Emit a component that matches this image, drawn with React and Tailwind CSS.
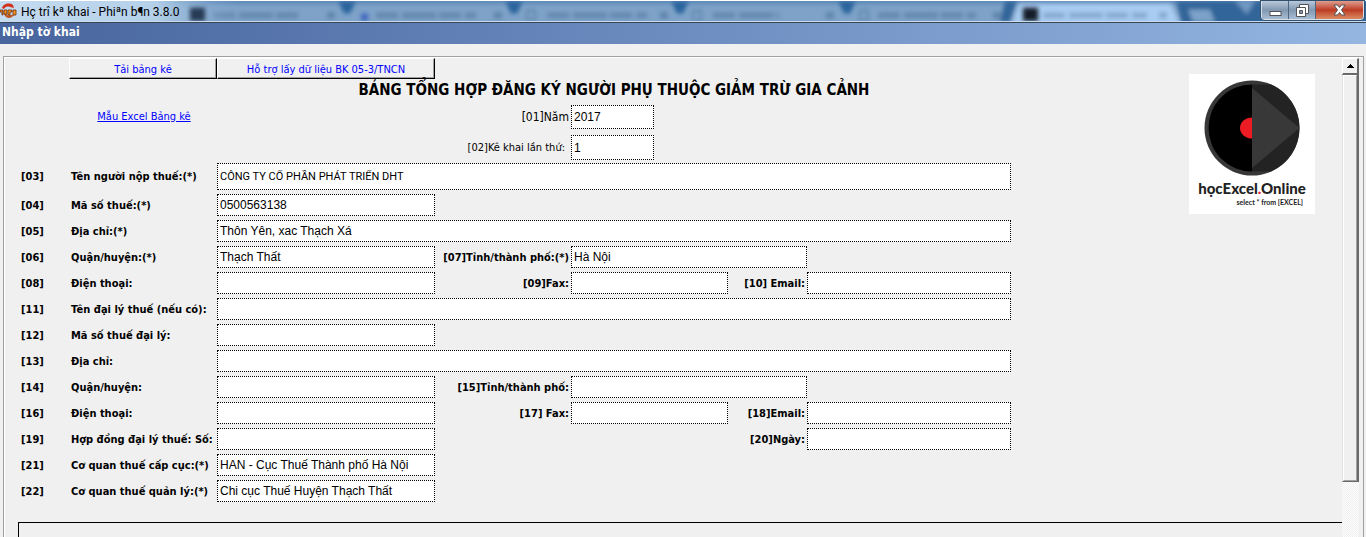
import { clsx } from "clsx";

const rows = [
  {
    code: "03",
    label: "Tên người nộp thuế:(*)",
    value: "CÔNG TY CỔ PHẦN PHÁT TRIỂN DHT",
    wide: true,
    tall: true,
  },
  { code: "04", label: "Mã số thuế:(*)", value: "0500563138" },
  { code: "05", label: "Địa chỉ:(*)", value: "Thôn Yên, xac Thạch Xá", wide: true },
  {
    code: "06",
    label: "Quận/huyện:(*)",
    value: "Thạch Thất",
    city: { label: "[07]Tỉnh/thành phố:(*)", value: "Hà Nội" },
  },
  {
    code: "08",
    label: "Điện thoại:",
    fax: { label: "[09]Fax:" },
    last: { label: "[10] Email:" },
  },
  { code: "11", label: "Tên đại lý thuế (nếu có):", wide: true },
  { code: "12", label: "Mã số thuế đại lý:" },
  { code: "13", label: "Địa chỉ:", wide: true },
  { code: "14", label: "Quận/huyện:", city: { label: "[15]Tỉnh/thành phố:" } },
  {
    code: "16",
    label: "Điện thoại:",
    fax: { label: "[17] Fax:" },
    last: { label: "[18]Email:" },
  },
  { code: "19", label: "Hợp đồng đại lý thuế: Số:", last: { label: "[20]Ngày:" } },
  {
    code: "21",
    label: "Cơ quan thuế cấp cục:(*)",
    value: "HAN - Cục Thuế Thành phố Hà Nội",
  },
  {
    code: "22",
    label: "Cơ quan thuế quản lý:(*)",
    value: "Chi cục Thuế Huyện Thạch Thất",
  },
];

const gridCols =
  "grid grid-cols-[50px_146px_218fr_136px_157fr_79fr_204fr] items-center";
const tahoma = "font-['DejaVu_Sans_Condensed','DejaVu_Sans',sans-serif]";
const arial = "text-[12px] font-['Liberation_Sans',sans-serif]";
const labelText = "pt-0.5 text-[11px] font-bold whitespace-nowrap";
const raisedButton =
  "h-[21px] border border-white border-r-black border-b-black pt-0.5 text-[11px] leading-4 whitespace-nowrap text-[#0000ff] shadow-[inset_-1px_-1px_0_#a0a0a0]";

function Field({ id, value = "", className }) {
  return (
    <input
      id={id}
      type="text"
      defaultValue={value}
      className={clsx(
        "w-full min-w-0 border border-dotted border-black bg-white px-0.5 outline-none",
        className
      )}
    />
  );
}

function SideLabel({ htmlFor, children, className }) {
  return (
    <label htmlFor={htmlFor} className={clsx("pr-0.5 text-right", labelText, className)}>
      {children}
    </label>
  );
}

function FormRow({ row }) {
  const id = `field-${row.code}`;

  return (
    <div className={gridCols}>
      <span className={labelText}>[{row.code}]</span>
      <label htmlFor={id} className={labelText}>
        {row.label}
      </label>
      <Field
        id={id}
        value={row.value}
        className={clsx(
          row.wide && "col-span-5",
          row.tall ? "h-[27px] text-[11px] font-['Roboto',sans-serif]" : ["h-[22px]", arial]
        )}
      />
      {row.city && (
        <>
          <SideLabel htmlFor={`${id}-city`}>{row.city.label}</SideLabel>
          <Field
            id={`${id}-city`}
            value={row.city.value}
            className={clsx("col-span-2 h-[22px]", arial)}
          />
        </>
      )}
      {row.fax && (
        <>
          <SideLabel htmlFor={`${id}-fax`}>{row.fax.label}</SideLabel>
          <Field id={`${id}-fax`} className={clsx("h-[22px]", arial)} />
        </>
      )}
      {row.last && (
        <>
          <SideLabel htmlFor={`${id}-last`} className="col-start-6">
            {row.last.label}
          </SideLabel>
          <Field id={`${id}-last`} className={clsx("h-[22px]", arial)} />
        </>
      )}
    </div>
  );
}

// browser tabs showing softly through the glass title bar
function GlassBackdrop() {
  return (
    <svg
      className="absolute inset-0 h-full w-full"
      viewBox="0 0 1366 22"
      preserveAspectRatio="none"
      aria-hidden="true"
    >
      <defs>
        <filter id="soft" x="-5%" y="-50%" width="110%" height="200%">
          <feGaussianBlur stdDeviation="2" />
        </filter>
        <linearGradient id="glow" x1="0" x2="1" y1="0" y2="0">
          <stop offset="0" stopColor="#c5dcf0" />
          <stop offset="0.65" stopColor="#b4d0e9" />
          <stop offset="1" stopColor="#7da3ca" stopOpacity="0" />
        </linearGradient>
      </defs>
      <rect width="1366" height="22" fill="#7ea2c8" />
      <g filter="url(#soft)">
        <rect x="-10" y="-3" width="1386" height="6" fill="#5a88b6" />
        {[347, 514, 680, 847].map((x) => (
          <path key={x} d={`M${x - 9} 0h18l-6 13h-6z`} fill="#2c659d" />
        ))}
        <path
          d="M213 15h85M376 15h100M547 15h100M713 15h66M878 15h98"
          stroke="#6488ae"
          strokeWidth="6"
          strokeDasharray="22 4 34 3"
        />
        <path
          d="M327 15h8M494 15h8M660 15h8M826 15h8M993 15h8"
          stroke="#6085ac"
          strokeWidth="7"
        />
        <rect x="361" y="13" width="7" height="8" fill="#4169c0" />
        <path
          d="M527 10h8v10h-8zM693 10h8v10h-8zM860 10h8v10h-8z"
          fill="none"
          stroke="#5f84ab"
          strokeWidth="2"
        />
        <path d="M1005 0h12l-7 22h-10zM1176 0h200v26h-194z" fill="#33659a" />
        <path d="M1012 25l7-22h152l9 22z" fill="#a9cdf2" />
        <path d="M1043 15h104" stroke="#86a8cf" strokeWidth="6" strokeDasharray="22 4 34 3" />
        <path d="M1159 15h8" stroke="#86a8cf" strokeWidth="7" />
        <path d="M1188 9h22l5 13h-22z" fill="#7ca2c9" />
        <path d="M1235 0h20l-8 14z" fill="#6f98c2" />
      </g>
      <rect width="240" height="22" fill="url(#glow)" />
      <g filter="url(#soft)">
        <rect x="190" y="7" width="15" height="14" fill="#263a55" />
        <rect x="1023" y="7" width="15" height="14" fill="#171c2c" />
      </g>
    </svg>
  );
}

function AppIcon() {
  return (
    <svg width="17" height="18" viewBox="0 0 17 18" aria-hidden="true">
      <path d="M2 6c1-4 7-6 11-3l1 3-4-1c-3-1-5 0-6 2z" fill="#d3311c" />
      <path d="M4 12c2 5 7 5 10 1l-4 0c-2 1-3 0-4-1z" fill="#c0561c" />
      <path
        d="M0 8h3v5H2v-3H0zm4 0h3v4H4zm4 0h4v2h-2v3H8zm5 0h3v5h-3z"
        fill="#f39a1d"
        stroke="#6d2a10"
        strokeWidth="0.8"
      />
    </svg>
  );
}

function WindowButtons() {
  return (
    <div className="absolute top-0 right-[2px] flex h-[19px] overflow-hidden rounded-b border border-t-0 border-white/80 ring-1 ring-[#33506f]">
      <button
        type="button"
        aria-label="Minimize"
        className="flex w-[27px] items-center justify-center border-r border-[#4d6580] bg-linear-to-b from-[#b9c9db] via-[#8298b1] to-[#a9bed4]"
      >
        <svg width="13" height="14" viewBox="0 0 13 14">
          <rect x="1" y="8.500" width="11" height="4" fill="#fff" stroke="#53545a" />
        </svg>
      </button>
      <button
        type="button"
        aria-label="Restore"
        className="flex w-[27px] items-center justify-center border-r border-[#4d6580] bg-linear-to-b from-[#b9c9db] via-[#8298b1] to-[#a9bed4]"
      >
        <svg width="13" height="13" viewBox="0 0 13 13">
          <path d="M3.500.500h9v9h-9z" fill="#fff" stroke="#53545a" />
          <path d="M.500 3.500h9v9h-9z" fill="#fff" stroke="#53545a" />
          <path d="M3.500 6.500h3v3h-3z" fill="#8298b1" stroke="#53545a" />
        </svg>
      </button>
      <button
        type="button"
        aria-label="Close"
        className="flex w-[47px] items-center justify-center bg-linear-to-b from-[#dd9c8f] via-[#bd3a22] to-[#d98a64]"
      >
        <svg width="13" height="12" viewBox="0 0 13 12">
          <path
            d="M1 1h3.500l2 2.500L8.500 1H12L8.500 6l3.500 5H8.500l-2-2.500-2 2.500H1l3.500-5z"
            fill="#fff"
            stroke="#53545a"
          />
        </svg>
      </button>
    </div>
  );
}

function Logo() {
  return (
    <div className="mt-4 flex h-[140px] w-[126px] shrink-0 flex-col items-center bg-white pt-1.5">
      <svg width="96" height="96" viewBox="0 0 96 96" aria-hidden="true">
        <circle cx="48" cy="48" r="47.500" fill="#373737" />
        <path d="M48 4.500a43.500 43.500 0 0 0 0 87z" fill="#000" />
        <path d="M48 4.500h19a47.500 47.500 0 0 1 0 87H48z" fill="#232323" />
        <path d="M48 8l47.500 40L48 88z" fill="#383838" />
        <path d="M48 37.500a12 10.500 0 0 0 0 21z" fill="#ed1c24" />
      </svg>
      <div className="flex w-full flex-col items-center font-['Lato',sans-serif] text-[#222]">
        <p className="text-[15px] leading-6 font-black whitespace-nowrap">
          họcExcel<span className="text-[#ed1c24]">.</span>Online
        </p>
        <p className="w-full pr-3 text-right text-[7px] leading-1 font-bold">
          select * from [EXCEL]
        </p>
      </div>
    </div>
  );
}

function ScrollBar() {
  return (
    <div className="flex w-[17px] shrink-0 flex-col bg-[repeating-conic-gradient(#fff_0_25%,#eee_0_50%)] bg-size-[2px_2px]">
      <button
        type="button"
        aria-label="Scroll up"
        className="flex h-[17px] items-center justify-center border-t border-r-2 border-b-2 border-l border-t-white border-r-[#696969] border-b-[#696969] border-l-white bg-[#f0f0f0]"
      >
        <svg width="7" height="4" viewBox="0 0 7 4">
          <path d="M3 0h1v1h1v1h1v1h1v1H0V3h1V2h1V1h1z" fill="#000" />
        </svg>
      </button>
      <div className="h-[85%] border-r-2 border-b border-l border-r-[#696969] border-b-[#696969] border-l-[#e3e3e3] bg-[#f0f0f0]">
        <div className="h-full border border-white border-r-[#a0a0a0] border-b-[#a0a0a0]" />
      </div>
    </div>
  );
}

export default function App() {
  return (
    <div className={clsx("flex h-screen flex-col overflow-hidden bg-[#f0f0f0] text-black", tahoma)}>
      <header className="relative h-[23px] shrink-0 border-t border-b border-t-white border-b-[#3b4654]">
        <GlassBackdrop />
        <div className="relative flex h-full items-center gap-1 border-b border-[#c8dcf0]">
          <AppIcon />
          <h1 className="pt-0.5 font-['Roboto',sans-serif] text-[12px] leading-5">
            Hç trî kª khai - Phiªn b¶n 3.8.0
          </h1>
        </div>
        <WindowButtons />
      </header>

      <div className="h-[21px] shrink-0 bg-linear-to-r from-[#48659f] to-[#94b6e1] px-0.5">
        <h2 className="text-[12px] leading-[18px] font-bold text-white">Nhập tờ khai</h2>
      </div>

      <main className="mt-3 mr-0.5 ml-[3px] flex min-h-0 flex-1 border-t border-r border-l border-[#a0a0a0]">
        <div className="flex min-w-0 flex-1 border-t border-l border-white">
          <div className="flex min-w-0 flex-1 flex-col">
            <div className="flex pr-[27px] pl-4">
              <form className="min-w-0 flex-1">
                <div className={gridCols}>
                  <button type="button" className={clsx("col-start-2 -ml-0.5", raisedButton)}>
                    Tải bảng kê
                  </button>
                  <button type="button" className={raisedButton}>
                    Hỗ trợ lấy dữ liệu BK 05-3/TNCN
                  </button>
                </div>

                <div className={gridCols}>
                  <h3 className="col-span-5 col-start-3 pb-1 text-center text-[15px] leading-[22px] font-bold whitespace-nowrap">
                    BẢNG TỔNG HỢP ĐĂNG KÝ NGƯỜI PHỤ THUỘC GIẢM TRỪ GIA CẢNH
                  </h3>
                </div>

                <div className={gridCols}>
                  <a
                    href="#"
                    className="col-start-2 text-center text-[11px] text-[#0000ff] underline"
                  >
                    Mẫu Excel Bảng kê
                  </a>
                  <label htmlFor="year" className="col-start-4 pr-0.5 text-right text-[12px]">
                    [01]Năm
                  </label>
                  <Field
                    id="year"
                    value="2017"
                    className={clsx("h-[24px] max-w-[83px]", arial)}
                  />
                </div>

                <div className={clsx(gridCols, "mt-1.5 mb-[3px]")}>
                  <label
                    htmlFor="times"
                    className="col-start-4 pt-0.5 pr-1.5 text-right text-[11px]"
                  >
                    [02]Kê khai lần thứ:
                  </label>
                  <Field
                    id="times"
                    value="1"
                    className={clsx("h-[25px] max-w-[83px]", arial)}
                  />
                </div>

                <div className="flex flex-col gap-1">
                  {rows.map((row) => (
                    <FormRow key={row.code} row={row} />
                  ))}
                </div>
              </form>
              <div className="w-[178px] shrink-0" />
              <Logo />
            </div>
            <div className="mt-5 ml-[13px] flex-1 border-t border-l border-black" />
          </div>
          <ScrollBar />
          <div className="w-1 shrink-0" />
        </div>
      </main>
    </div>
  );
}
